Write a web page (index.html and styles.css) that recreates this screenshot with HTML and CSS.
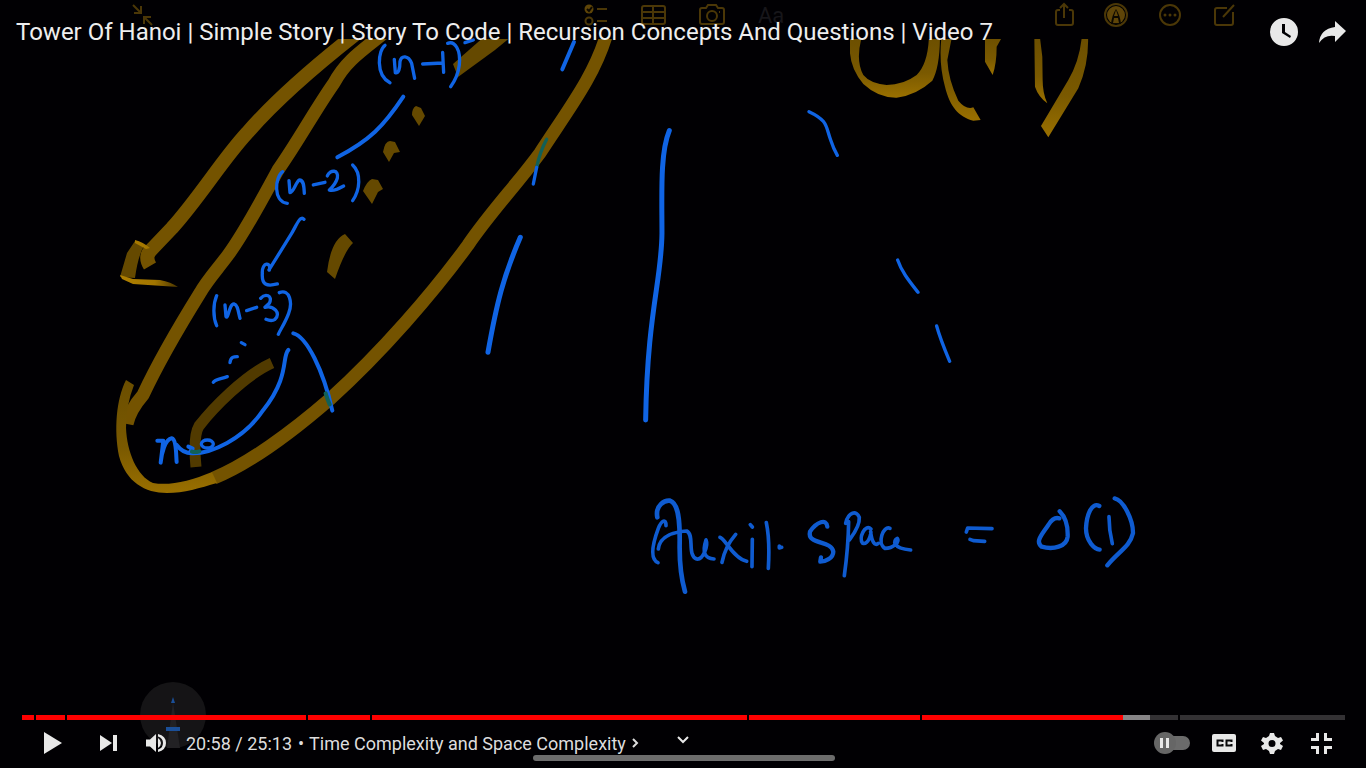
FILE: index.html
```html
<!DOCTYPE html>
<html lang="en">
<head>
<meta charset="utf-8">
<meta name="viewport" content="width=device-width, initial-scale=1">
<title>Tower Of Hanoi | Simple Story | Story To Code | Recursion Concepts And Questions | Video 7</title>
<link rel="stylesheet" href="styles.css">
</head>
<body>
<main class="player">
  <svg class="video" viewBox="0 0 1366 768" preserveAspectRatio="xMidYMid slice" role="img" aria-label="Handwritten recursion tree notes">
    <defs>
      <clipPath id="page"><rect x="0" y="39" width="1366" height="729"/></clipPath>
      <linearGradient id="ink" x1="0" y1="0" x2="0" y2="1"><stop offset="0" stop-color="#6b4e00"/><stop offset=".6" stop-color="#7a5900"/><stop offset="1" stop-color="#9a7000"/></linearGradient>
      <linearGradient id="head" gradientUnits="userSpaceOnUse" x1="120" y1="0" x2="178" y2="0"><stop offset="0" stop-color="#b08000"/><stop offset=".6" stop-color="#a07400"/><stop offset="1" stop-color="#4a3500"/></linearGradient>
    </defs>

    <!-- Notes app toolbar -->
    <g class="toolbar">
      <path d="M133 5l8 8M141 6v7h-7M152 25l-8-8M144 24v-7h7"/>
      <circle class="toolbar-fill" cx="589" cy="9" r="4.500"/><path class="pen-tip" d="M587 9l2 2 3-4"/><path d="M597 9h10M597 21h10"/><circle cx="589" cy="21" r="3.500"/>
      <rect x="642" y="6" width="23" height="18" rx="2"/><path d="M642 12h23M642 18h23M653 6v18"/>
      <path d="M702 8h4l2-3h8l2 3h4q2 0 2 2v12q0 2-2 2h-20q-2 0-2-2v-12q0-2 2-2z"/><circle cx="712" cy="16" r="5"/><path d="M719 12h1"/>
      <path d="M1060 10h-2q-2 0-2 2v11q0 2 2 2h13q2 0 2-2v-11q0-2-2-2h-2M1064 18v-14M1060 8l4-4 4 4"/>
      <circle cx="1116" cy="15" r="11"/><circle class="toolbar-fill" cx="1116" cy="15" r="9"/><path class="pen-dark" d="M1111 24Q1112 15 1116 9Q1120 15 1121 24Z"/><path class="toolbar-fill" d="M1116 10L1118 16H1114ZM1114 18H1118L1119 23H1113Z"/>
      <circle cx="1170" cy="15" r="10"/><path class="dots" d="M1165 15h0M1170 15h0M1175 15h0"/>
      <path d="M1227 8h-10q-2 0-2 2v13q0 2 2 2h14q2 0 2-2v-11M1223 17l11-12"/>
    </g>
    <text class="toolbar-text" x="758" y="23">Aa</text>

    <!-- Highlighter -->
    <g clip-path="url(#page)">
      <g class="gold">
        <path d="M357 33C320 62 280 95 247 133C222 160 200 197 172 228L152 249Q144 256 150 266" stroke-width="14"/>
        <path d="M384 33C360 52 345 62 334 83C315 110 299 140 278 170C260 203 245 232 228 255C217 270 208 279 200 293C177 330 158 363 143 395Q130 410 127 424" stroke-width="13"/>
        <path d="M214 478C248 464 292 432 330 399C382 352 433 293 468 245C492 210 515 187 540 153C570 107 595 75 607 33" stroke-width="13"/>
        <path d="M272 363C245 375 213 408 199 426Q193 436 196 467" stroke-width="11" opacity=".7"/>
      </g>
      <path class="gold-fill" d="M135 241L144 246Q138 256 135 278L120 277L127 253Z"/>
      <path fill="url(#head)" d="M135 240Q143 242 150 248L146 249L135 243ZM120 275L133 279L160 280Q171 282 178 287L133 284L122 279Z"/>
      <path fill="url(#ink)" d="M126 380C116 400 114 430 119 456C126 482 145 493 167 493C184 493 200 488 217 483L212 472C190 481 170 486 153 483C137 476 127 452 126 428Q126 405 134 385Z"/>
      <g class="gold-fill">
        <path d="M345 234L353 243Q345 250 335 279L327 272Q331 240 345 234Z"/>
        <path d="M412 115Q412 108 416 106L421 108L425 116L419 126Z"/>
        <path d="M383 152Q385 141 390 141L395 142L400 152L394 153L389 162Z"/>
        <path d="M363 191Q367 181 372 179L378 180L383 189L378 192L372 204Z"/>
        <path d="M453 64L485 36L512 36L495 50L458 77Z"/>
      </g>
      <g fill="url(#ink)" transform="translate(830) scale(.3333)">
        <path d="M60 105V160Q64 210 100 252Q145 294 200 293Q260 285 307 242Q330 200 330 105H297Q295 190 260 225Q220 255 170 255Q120 250 100 225Q75 180 97 105Z"/>
        <path d="M335 105Q325 190 345 260C360 320 385 350 430 362L452 360L430 322Q408 330 385 302Q355 240 352 180L367 105Z"/>
        <path d="M465 105V185L488 225Q500 190 500 140L520 105Z"/>
        <path d="M613 105L615 260Q625 290 652 310Q638 280 638 240L637 170L629 105Z"/>
        <path d="M756 105Q750 180 715 240L633 378L655 412L745 265Q778 190 774 105Z"/>
      </g>
    </g>

    <!-- Blue pen -->
    <g class="blue" transform="translate(100) scale(.3333)">
      <path d="M855 136C835 150 825 225 870 248M883 178L886 218C896 222 900 205 900 185C904 165 925 165 935 190L944 235M968 192L1028 189M1028 157L1031 217M1043 130C1065 122 1083 150 1078 195C1075 220 1063 245 1052 260M1095 128L1120 120"/>
      <path d="M910 290C850 380 810 420 712 472" stroke-width="12"/>
      <path d="M548 515C525 530 518 605 562 610M567 542L570 578C580 580 588 545 598 540C612 540 612 560 613 580M640 555L675 547M682 528C690 508 718 508 712 535C706 555 690 568 688 570C700 575 715 567 731 558M758 495C785 520 780 570 758 602"/>
    </g>
    <g class="blue" transform="translate(100 170) scale(.3333)">
      <path d="M612 148C600 135 590 165 575 190L507 300M508 300C515 275 485 275 487 310C485 345 500 350 532 342"/>
      <path d="M350 377C340 400 338 440 350 467M375 405L378 440C385 450 388 400 402 402C415 405 415 430 420 445M440 422L470 412M482 385C495 370 520 375 508 400L495 412C520 405 545 430 525 448Q515 455 498 448M538 368C570 355 578 400 566 430C555 460 540 480 535 493"/>
      <path d="M580 490C620 500 670 600 697 722M565 540C545 560 570 620 490 720C430 810 330 850 280 850Q250 852 230 825" stroke-width="12"/>
      <path d="M424 518L435 524M390 578C392 560 402 560 412 560M340 637C345 628 360 628 382 620"/>
      <path d="M172 812L190 812L182 878C185 850 195 808 215 805C230 808 228 860 230 876M265 830L278 836L270 846" stroke-width="12"/>
      <ellipse cx="322" cy="822" rx="18" ry="12"/>
      <path class="teal" d="M276 845Q285 848 298 844M677 670Q683 690 689 703" stroke-width="12"/>
    </g>
    <g class="blue" transform="translate(360 100) scale(.3333)">
      <path d="M481 412C430 530 410 610 384 757M928 92C900 160 906 280 906 400C905 540 862 640 857 960" stroke-width="15"/>
      <path class="teal" d="M560 118Q540 155 530 202"/>
      <path d="M530 202L520 252"/>
      <path d="M642 -174L607 -92" stroke-width="12"/>
    </g>
    <g class="blue" transform="translate(780 90) scale(.3333)">
      <path d="M87 65C145 92 137 110 152 150Q160 175 172 196M353 510C365 545 385 570 414 607M470 708Q480 745 509 814"/>
    </g>
    <g class="blue dim" transform="translate(640 480) scale(.3333)">
      <path d="M52 112C45 75 75 60 90 62C115 70 120 120 119 190C118 250 125 300 135 335" stroke-width="14"/>
      <path d="M78 137C78 115 65 120 55 145C42 180 25 235 54 248M55 207C60 165 110 155 140 153C165 165 140 225 170 237C190 240 205 195 198 180Q180 235 222 237"/>
      <path d="M240 172C255 175 280 235 320 244M287 163Q255 200 246 247M337 178L336 260M331 134L337 141M379 128Q390 180 385 265M418 198V204L425 202"/>
      <path d="M562 140C560 115 530 125 510 155C500 195 575 180 580 215C580 235 555 245 541 245L543 232" stroke-width="13"/>
      <path d="M626 125Q625 200 613 287M617 130C625 95 650 90 658 112C660 140 635 170 628 180M693 147C675 130 655 175 668 190C685 195 695 160 692 155C695 185 705 200 715 190M750 145C730 135 710 190 735 205C760 205 780 185 772 175C760 180 755 205 812 210"/>
    </g>
    <g class="blue dim" transform="translate(890 480) scale(.3333)">
      <path d="M229 156L233 144L306 146M240 178L250 182L284 184"/>
      <path d="M508 115Q490 110 475 135C455 165 435 185 455 200C490 210 530 200 533 170Q535 120 509 94M628 78C605 65 590 105 588 145C588 185 615 208 629 209M674 55C700 60 730 120 729 160C720 200 685 215 652 256" stroke-width="13"/>
      <path d="M657 110Q657 150 667 191"/>
    </g>

    <!-- Floating pen tool -->
    <circle class="pen-disc" cx="173" cy="715" r="33"/>
    <path class="pen-body" d="M173 702L167 748H180Z"/>
    <path class="pen-blue" d="M173 697L171 703H175ZM166 727H180V731H166Z"/>
    <rect class="home-bar" x="533" y="755" width="302" height="6" rx="3"/>
  </svg>

  <header class="top-bar">
    <h1 class="title">Tower Of Hanoi | Simple Story | Story To Code | Recursion Concepts And Questions | Video 7</h1>
    <div class="top-actions">
      <button class="top-button" aria-label="Watch later"><svg viewBox="0 0 32 32"><path fill-rule="evenodd" d="M16 2a14 14 0 1 0 0 28a14 14 0 0 0 0-28zM14 8h3v8l6 4-1 2-8-5z"/></svg></button>
      <button class="top-button" aria-label="Share"><svg viewBox="0 0 32 32"><path d="M19 5L30 15L19 26V20Q9 18 3 27Q4 13 19 11Z"/></svg></button>
    </div>
  </header>

  <section class="bottom-bar" aria-label="Player controls">
    <div class="progress">
      <div class="chapters">
        <span class="chapter played" style="flex-grow:12"></span>
        <span class="chapter played" style="flex-grow:29"></span>
        <span class="chapter played" style="flex-grow:239"></span>
        <span class="chapter played" style="flex-grow:62"></span>
        <span class="chapter played" style="flex-grow:375"></span>
        <span class="chapter played" style="flex-grow:171"></span>
        <span class="chapter current" style="flex-grow:256"></span>
        <span class="chapter" style="flex-grow:165"></span>
      </div>
      <input class="seek" type="range" min="0" max="1513" value="1258" aria-label="Seek">
    </div>
    <div class="controls">
      <button class="control play" aria-label="Play"><svg viewBox="0 0 24 24"><path d="M4 1L22 12L4 23Z"/></svg></button>
      <button class="control next" aria-label="Next"><svg viewBox="0 0 24 24"><path d="M4 4L16 12L4 20ZM17 4H21V20H17Z"/></svg></button>
      <button class="control volume" aria-label="Mute"><svg viewBox="0 0 24 24"><path d="M2 8.500H6L12 3V21L6 15.500H2ZM14 7Q17 9 17 12T14 17ZM14 3Q22 5 22 12T14 21V18.500Q19 17 19 12T14 5.500Z"/></svg></button>
      <span class="time">20:58 / 25:13</span>
      <button class="chapter-title">• <span>Time Complexity and Space Complexity</span><svg class="chevron" viewBox="0 0 8 12"><path d="M2 2L6 6L2 10"/></svg></button>
      <button class="expand" aria-label="More"><svg viewBox="0 0 12 8"><path d="M1 1L6 6L11 1"/></svg></button>
      <div class="right-controls">
        <label class="autoplay"><input type="checkbox" aria-label="Autoplay"><span class="knob"></span></label>
        <button class="control" aria-label="Subtitles"><svg viewBox="0 0 24 24"><path d="M2 3H22Q24 3 24 5V19Q24 21 22 21H2Q0 21 0 19V5Q0 3 2 3Z"/><path class="cutout" d="M10.500 11V9.500H5.500V14.500H10.500V13M19.500 11V9.500H14.500V14.500H19.500V13"/></svg></button>
        <button class="control" aria-label="Settings"><svg viewBox="0 0 24 24"><path fill-rule="evenodd" d="M10 2H14L15 5L18 7L21 6L23 9.500L20 12L20 13L23 15L21 19L18 18L15 20L14 23H10L9 20L6 18L3 19L1 15L4 13V12L1 9.500L3 6L6 7L9 5ZM12 9A3.500 3.500 0 1 0 12 16A3.500 3.500 0 1 0 12 9Z"/></svg></button>
        <button class="control" aria-label="Exit full screen"><svg viewBox="0 0 24 24"><path d="M8 2H11V10H3V7H8ZM16 2H19V7H24V10H16ZM3 15H11V23H8V18H3ZM16 15H24V18H19V23H16Z"/></svg></button>
      </div>
    </div>
  </section>
</main>
</body>
</html>
```

FILE: styles.css
```css
* {
  box-sizing: border-box;
}

body {
  margin: 0;
  background: #000;
  color: #e8e8e8;
  font-family: Roboto, "Liberation Sans", sans-serif;
}

.player {
  position: relative;
  display: flex;
  flex-direction: column;
  justify-content: space-between;
  min-height: 100vh;
  overflow: hidden;
  background: #010003;
}

.video {
  position: absolute;
  inset: 0;
  width: 100%;
  height: 100%;
}

.toolbar {
  fill: none;
  stroke: #4b3707;
  stroke-width: 2;
}

.toolbar-fill {
  fill: #5f4508;
  stroke: none;
}

.pen-tip {
  stroke: #0c0800;
}

.pen-dark {
  fill: #0c0800;
  stroke: none;
}

.dots {
  stroke-width: 3;
  stroke-linecap: round;
}

.toolbar-text {
  fill: #17161a;
  font-size: 22px;
}

.gold {
  fill: none;
  stroke: #745300;
  stroke-linejoin: round;
}

.gold-fill {
  fill: #654900;
}

.blue {
  fill: none;
  stroke: #1064e4;
  stroke-width: 10;
  stroke-linecap: round;
  stroke-linejoin: round;
}

.dim {
  stroke: #0f5bd0;
  stroke-width: 11;
}

.teal {
  stroke: #106058;
}

.pen-disc {
  fill: #151416;
}

.pen-body {
  fill: #222124;
}

.pen-blue {
  fill: #1b4f98;
}

.home-bar {
  fill: #6c6c6c;
}

.top-bar,
.bottom-bar {
  position: relative;
}

.top-bar {
  display: flex;
  align-items: center;
  justify-content: space-between;
  padding: 12px 18px 0 16px;
}

.title {
  margin: 0;
  color: #eee;
  font-size: 24px;
  font-weight: 400;
  line-height: 40px;
}

.top-actions {
  display: flex;
  gap: 16px;
}

button {
  display: flex;
  align-items: center;
  justify-content: center;
  padding: 0;
  border: 0;
  background: none;
  color: inherit;
  font: inherit;
  cursor: pointer;
}

.top-button {
  width: 32px;
  height: 40px;
}

.top-button svg {
  width: 32px;
  height: 32px;
  fill: #e8e8e8;
}

.bottom-bar {
  padding: 0 22px 2px;
}

.progress {
  position: relative;
  margin-right: -1px;
}

.chapters {
  display: flex;
  gap: 2px;
  height: 5px;
}

.chapter {
  flex: 0 1 0;
  background: #333134;
}

.played {
  background: #f00;
}

.current {
  background: linear-gradient(90deg, #f00 0 78.5%, #868486 78.5% 89%, #333134 89%);
}

.seek {
  position: absolute;
  inset: 0;
  width: 100%;
  height: 5px;
  margin: 0;
  opacity: 0;
  cursor: pointer;
}

.controls {
  display: flex;
  align-items: center;
  height: 46px;
}

.control {
  width: 48px;
  height: 46px;
}

.control svg {
  width: 24px;
  height: 24px;
  fill: #e8e8e8;
}

.control .cutout {
  fill: none;
  stroke: #08080a;
  stroke-width: 2;
}

.play {
  width: 60px;
}

.next {
  width: 52px;
}

.volume {
  width: 44px;
}

.time {
  margin-left: 8px;
  color: #ddd;
  font-size: 18px;
  white-space: nowrap;
}

.chapter-title {
  gap: 5px;
  margin-left: 6px;
  color: #ddd;
  font-size: 18px;
  white-space: nowrap;
}

.chevron {
  width: 8px;
  height: 12px;
  fill: none;
  stroke: #ddd;
  stroke-width: 2;
}

.expand {
  width: 48px;
  height: 40px;
  margin: 0 0 6px 20px;
}

.expand svg {
  width: 12px;
  height: 8px;
  fill: none;
  stroke: #e8e8e8;
  stroke-width: 2;
}

.right-controls {
  display: flex;
  align-items: center;
  margin-left: auto;
}

.autoplay {
  display: flex;
  justify-content: center;
  align-items: center;
  position: relative;
  width: 56px;
}

.autoplay input {
  appearance: none;
  width: 32px;
  height: 14px;
  margin: 0 0 0 4px;
  border-radius: 7px;
  background: #6b6b6b;
}

.knob {
  position: absolute;
  left: 10px;
  width: 22px;
  height: 22px;
  border-radius: 50%;
  background: linear-gradient(90deg, transparent 6px, #e8e8e8 6px 9px, transparent 9px 12px, #e8e8e8 12px 15px, transparent 15px) center / 22px 10px no-repeat #666;
  pointer-events: none;
}
```
